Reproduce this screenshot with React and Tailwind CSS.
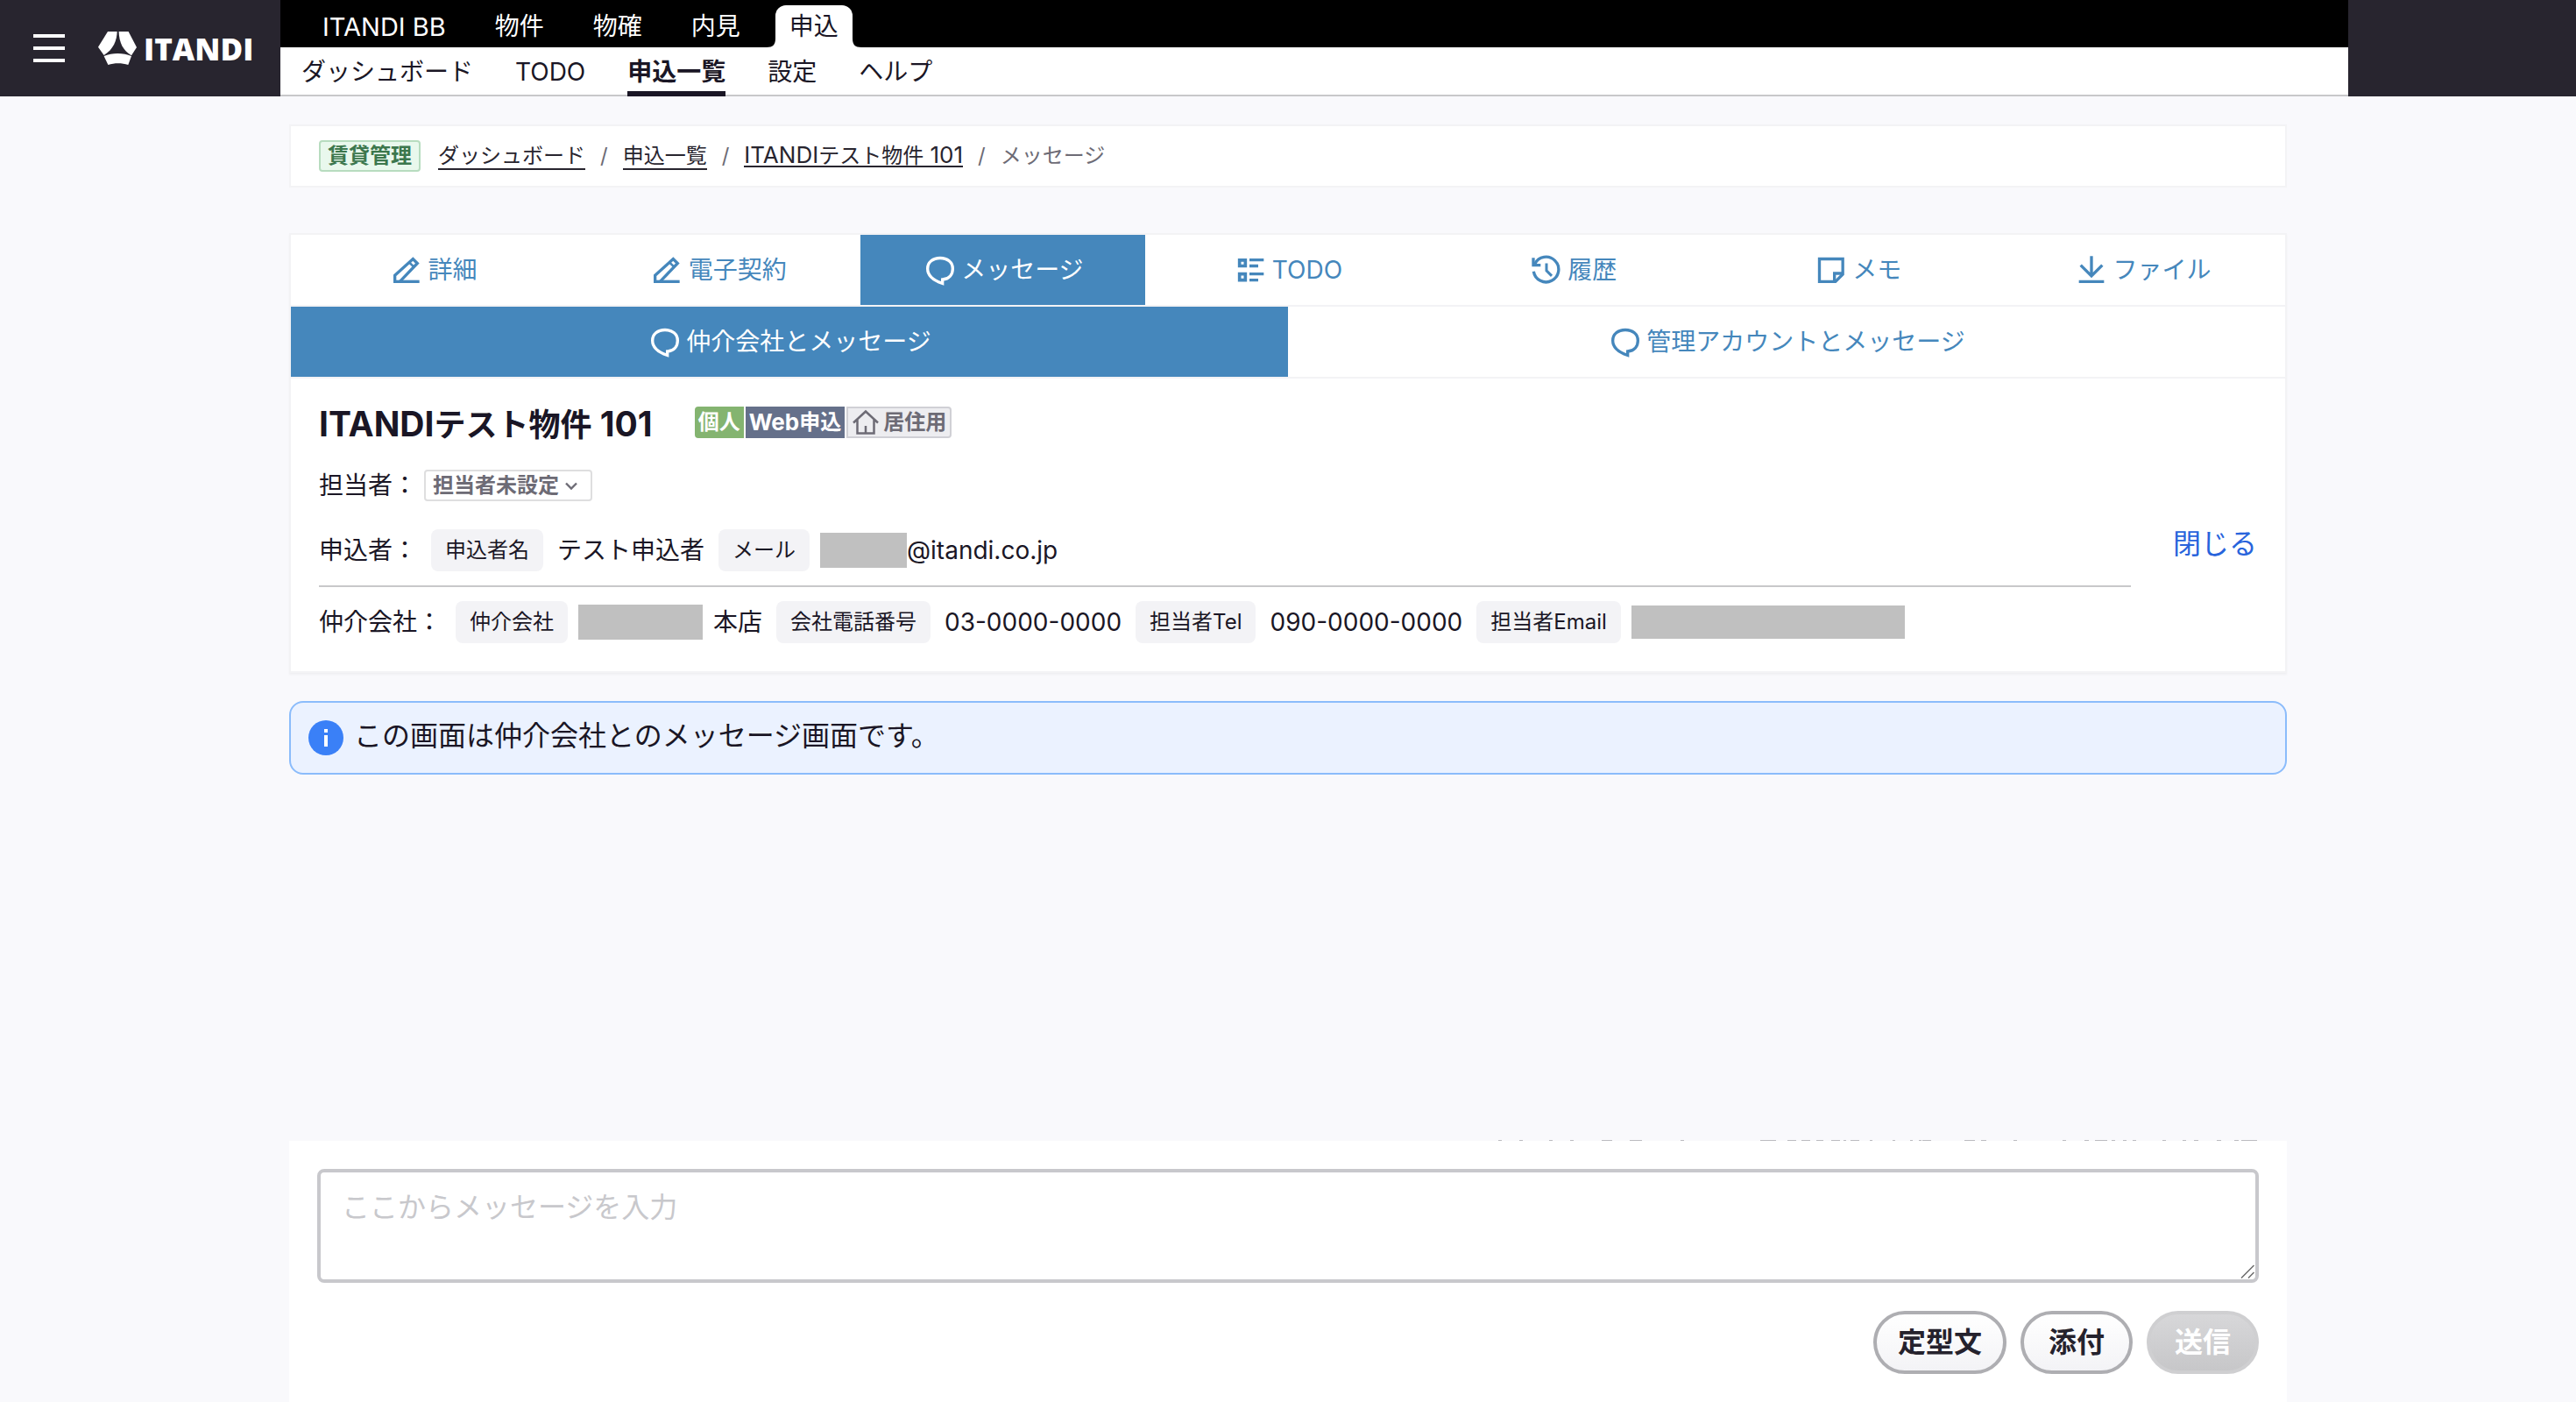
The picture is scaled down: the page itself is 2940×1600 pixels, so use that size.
import React from "react";

const productLinks = ["物件", "物確", "内見"];

function Icon({ children, className = "size-10" }) {
  return (
    <svg viewBox="0 0 24 24" fill="none" stroke="currentColor" strokeWidth="2" className={className + " shrink-0"} aria-hidden="true">
      {children}
    </svg>
  );
}

const PencilIcon = () => (
  <Icon>
    <path d="M2.4 20H20.2" />
    <path d="M3.4 20v-4.2L15.8 4.5l3 3L6.8 20" strokeWidth="2" />
    <path d="M13.2 6.800l3.200 3.200" strokeWidth="1.600" />
  </Icon>
);

const BubbleIcon = () => (
  <Icon>
    <path d="M13.6 18.600c4.600-.4 7-3.500 7-7.400C20.600 6.800 17 3.900 12 3.900S3.400 6.800 3.400 11.200c0 4.700 4.200 8 10.200 10z" />
  </Icon>
);

const TodoIcon = () => (
  <Icon>
    <path d="M4 5.300h4v4H4zM4 14.800h4v4.200H4z" strokeWidth="2.200" />
    <path d="M10.800 5.200h9.800M10.800 9.300h6M10.800 14.800h9.800M10.800 19h6" strokeWidth="2" />
  </Icon>
);

const HistoryIcon = () => (
  <Icon>
    <path d="M4 7.900A8.600 8.600 0 1 1 3.200 13" />
    <path d="M3 3.800v5h5" />
    <path d="M12 7.500v5l3.600 3.600" strokeWidth="1.800" />
  </Icon>
);

const MemoIcon = () => (
  <Icon>
    <path d="M3.900 4.500h16V15l-5 5h-11z" />
    <path d="M14.200 20v-5.600H20" />
  </Icon>
);

const DownloadIcon = () => (
  <Icon>
    <path d="M12 2.500v14M4.600 8.800L12 16.200l7.400-7.400M3.400 20h17.200" />
  </Icon>
);

const tabs = [
  { label: "詳細", icon: PencilIcon },
  { label: "電子契約", icon: PencilIcon },
  { label: "メッセージ", icon: BubbleIcon, active: true },
  { label: "TODO", icon: TodoIcon },
  { label: "履歴", icon: HistoryIcon },
  { label: "メモ", icon: MemoIcon },
  { label: "ファイル", icon: DownloadIcon },
];

const subTabs = [
  { label: "仲介会社とメッセージ", active: true },
  { label: "管理アカウントとメッセージ" },
];

function Tab({ label, icon: TabIcon, active }) {
  return (
    <a
      href="#"
      aria-current={active ? "page" : undefined}
      className={
        "flex h-20 flex-1 items-center justify-center gap-1 text-[28px] leading-none " +
        (active ? "bg-[#4587bc] text-white" : "text-[#4587bc]")
      }
    >
      <TabIcon />
      {label}
    </a>
  );
}

function Logo() {
  return (
    <a href="#" aria-label="ITANDI" className="flex items-center gap-2 text-white">
      <svg viewBox="112 34 44 40" className="h-10 w-11" fill="currentColor" aria-hidden="true">
        <path d="M123 35h10.600c0 9.500-4.200 20.500-15 27l-6.600-9.300z" />
        <path d="M135.600 35h11L156 53l-6 9.300c-9.500-5.500-14-14.500-14.400-27.300z" />
        <path d="M118.600 63c9.500-4 22-4 31.400 0l-3.700 10c-7.500-2.200-15.500-2.200-22.900 0z" />
      </svg>
      <span className="font-['Open_Sans',sans-serif] text-[35px] leading-none font-extrabold">ITANDI</span>
    </a>
  );
}

function Chip({ children }) {
  return (
    <dt className="flex h-12 items-center rounded-lg bg-[#f3f3f6] px-4 text-2xl leading-none whitespace-nowrap">{children}</dt>
  );
}

const slivers = [
  [56, 4], [80, 4], [114, 4], [138, 4], [174, 12], [206, 14], [264, 4], [355, 18], [386, 10], [402, 10],
  [419, 8], [436, 10], [450, 3], [458, 10], [480, 3], [506, 3], [526, 3], [536, 3], [540, 10], [588, 12], [607, 6],
  [644, 4], [700, 4], [725, 5], [737, 14], [756, 4], [769, 4], [780, 4], [814, 4], [837, 4], [850, 5], [876, 5],
  [896, 5], [904, 18],
];

export default function App() {
  return (
    <div className="flex min-h-screen flex-col bg-[#f9f9fc] font-['Inter','Noto_Sans_CJK_JP',sans-serif] text-[#1a1625]">
      <header className="flex bg-[#28252f]">
        <div className="flex w-80 shrink-0 items-center gap-[38px] pl-[38px]">
          <button type="button" aria-label="メニュー" className="flex w-9 flex-col gap-2.5">
            <span className="h-1 bg-white" />
            <span className="h-1 bg-white" />
            <span className="h-1 bg-white" />
          </button>
          <Logo />
        </div>
        <div className="min-w-0 flex-1">
          <nav aria-label="サービス" className="flex h-[54px] items-end gap-6 bg-black pl-8 text-[28px] leading-none text-white">
            <a href="#" className="flex h-12 items-center px-4 text-[29px]">ITANDI BB</a>
            {productLinks.map((label) => (
              <a key={label} href="#" className="flex h-12 items-center px-4">
                {label}
              </a>
            ))}
            <a href="#" aria-current="page" className="relative flex h-12 items-center rounded-t-xl bg-white px-4 text-[#1a1625]">
              <svg viewBox="0 0 10 10" className="absolute bottom-0 -left-2.5 size-2.5" aria-hidden="true">
                <path d="M10 0v10H0C7 10 10 7 10 0z" fill="#fff" />
              </svg>
              申込
              <svg viewBox="0 0 10 10" className="absolute -right-2.5 bottom-0 size-2.5" aria-hidden="true">
                <path d="M0 0v10h10C3 10 0 7 0 0z" fill="#fff" />
              </svg>
            </a>
          </nav>
          <nav aria-label="申込" className="flex h-14 gap-12 border-b-2 border-[#c8c8ca] bg-white pt-0.5 pl-6 text-[28px] leading-none">
            <a href="#" className="flex items-center">ダッシュボード</a>
            <a href="#" className="flex items-center">TODO</a>
            <a href="#" aria-current="page" className="-mb-0.5 flex items-center border-b-6 border-[#1a1625] pt-1 font-bold">
              申込一覧
            </a>
            <a href="#" className="flex items-center">設定</a>
            <a href="#" className="flex items-center">ヘルプ</a>
          </nav>
        </div>
        <div className="w-[260px] shrink-0" />
      </header>

      <main className="mx-auto flex w-full max-w-[2280px] flex-1 flex-col pt-8">
        <nav aria-label="パンくず" className="flex h-[72px] items-center border-2 border-[#f3f3f5] bg-white px-8 text-2xl leading-none text-[#28252f]">
          <span className="mr-5 flex h-9 items-center rounded border-2 border-[#b7dcbf] bg-[#e9f8ed] px-2 font-bold text-[#3c774d]">賃貸管理</span>
          <ol className="flex items-center gap-[17px] text-[#6d6b75]">
            <li><a href="#" className="border-b-2 border-[#28252f] text-[#28252f]">ダッシュボード</a></li>
            <li aria-hidden="true">/</li>
            <li><a href="#" className="border-b-2 border-[#28252f] text-[#28252f]">申込一覧</a></li>
            <li aria-hidden="true">/</li>
            <li>
              <a href="#" className="flex h-[26px] items-baseline border-b-2 border-[#28252f] text-[#28252f]">
                <span className="text-[26px] leading-6">ITANDI</span>テスト物件<span className="text-[26px] leading-6 whitespace-pre"> 101</span>
              </a>
            </li>
            <li aria-hidden="true">/</li>
            <li aria-current="page">メッセージ</li>
          </ol>
        </nav>

        <section className="mt-[52px] border-2 border-[#f3f3f5] bg-white shadow-[0_2px_2px_rgba(0,0,0,0.04)]">
          <nav aria-label="申込メニュー" className="flex border-b-2 border-[#f3f3f5]">
            {tabs.map((tab) => (
              <Tab key={tab.label} {...tab} />
            ))}
          </nav>
          <nav aria-label="メッセージの相手" className="flex border-b-2 border-[#f3f3f5]">
            {subTabs.map((tab) => (
              <Tab key={tab.label} {...tab} icon={BubbleIcon} />
            ))}
          </nav>

          <div className="p-8">
            <div className="flex h-10 items-start gap-12">
              <h1 className="text-4xl leading-10 font-bold whitespace-pre">
                <span className="text-[39px] leading-10">ITANDI</span>テスト物件<span className="text-[39px] leading-10"> 101</span>
              </h1>
              <div className="flex h-9 gap-0.5 text-2xl leading-none font-bold">
                <span className="flex items-center rounded-l bg-[#84b470] px-1 text-white">個人</span>
                <span className="flex items-center bg-[#65708a] px-1 text-white">
                  <span className="text-[26px]">Web</span>申込
                </span>
                <span className="flex items-center gap-1 rounded-r border-2 border-[#d0d0d5] bg-[#ededf0] px-1 text-[#6d6b75]">
                  <svg viewBox="0 0 32 30" fill="none" stroke="currentColor" strokeWidth="2.500" className="h-[30px] w-8" aria-hidden="true">
                    <path d="M2 15.500L16 2.500l14 13M6.500 12V27.500h19V12M16 27v-8" />
                  </svg>
                  居住用
                </span>
              </div>
            </div>

            <div className="mt-1 flex items-center gap-12">
              <div className="min-w-0 flex-1 text-[28px] leading-none">
                <div className="flex items-center gap-2 pt-7">
                  <label htmlFor="assignee">担当者：</label>
                  <div className="relative">
                    <select
                      id="assignee"
                      className="block h-9 appearance-none rounded border-2 border-[#dededf] bg-white pr-9 pl-2 text-2xl leading-none font-bold text-[#6d6b75]"
                    >
                      <option>担当者未設定</option>
                    </select>
                    <svg viewBox="0 0 16 10" fill="none" stroke="#6d6b75" strokeWidth="2.400" className="pointer-events-none absolute top-3.5 right-4 h-2.5 w-4" aria-hidden="true">
                      <path d="M2 1.500l6 6 6-6" />
                    </svg>
                  </div>
                </div>

                <div className="mt-8 flex items-center gap-4 border-b-2 border-[#c8c8ca] pb-4">
                  <span>申込者：</span>
                  <dl className="flex items-center gap-4">
                    <Chip>申込者名</Chip>
                    <dd>テスト申込者</dd>
                    <Chip>メール</Chip>
                    <dd className="-ml-1 flex items-center">
                      <span className="h-10 w-[99px] bg-[#c0c0c0]" />
                      @itandi.co.jp
                    </dd>
                  </dl>
                </div>

                <div className="flex items-center gap-4 pt-4">
                  <span>仲介会社：</span>
                  <dl className="flex items-center gap-4">
                    <Chip>仲介会社</Chip>
                    <dd className="-ml-1 flex items-center gap-3">
                      <span className="h-10 w-[142px] bg-[#c0c0c0]" />
                      本店
                    </dd>
                    <Chip>会社電話番号</Chip>
                    <dd>03-0000-0000</dd>
                    <Chip>担当者Tel</Chip>
                    <dd>090-0000-0000</dd>
                    <Chip>担当者Email</Chip>
                    <dd className="-ml-1 h-[38px] w-[312px] bg-[#c0c0c0]" />
                  </dl>
                </div>
              </div>
              <button type="button" className="text-[32px] leading-none text-[#2864dc]">閉じる</button>
            </div>
          </div>
        </section>

        <div role="status" className="mt-8 flex h-[84px] items-center gap-3 rounded-2xl border-2 border-[#8bbcfb] bg-[#ebf2ff] pl-5 text-[32px] leading-none">
          <svg viewBox="0 0 40 40" className="size-10" aria-hidden="true">
            <circle cx="20" cy="20" r="20" fill="#3a80f7" />
            <path d="M18 10h4v4h-4zM18 17h4v13h-4z" fill="#fff" />
          </svg>
          <p className="pb-1">この画面は仲介会社とのメッセージ画面です。</p>
        </div>

        <svg viewBox="0 0 924 1" className="mt-auto mr-8 h-px w-[924px] self-end" fill="#bcbcc0" aria-hidden="true">
          {slivers.map(([x, w]) => (
            <rect key={x} x={x} y="0" width={w} height="1" />
          ))}
        </svg>
        <form className="bg-white p-8">
          <div className="relative">
            <textarea
              aria-label="メッセージ"
              placeholder="ここからメッセージを入力"
              className="block h-[130px] w-full resize-none rounded-lg border-4 border-[#c8c8cc] bg-white px-6 pt-[18px] text-[32px] leading-[44px] placeholder:text-[#c8c8cc]"
            />
            <svg viewBox="0 0 16 16" stroke="#6b6b6b" strokeWidth="1.500" className="pointer-events-none absolute right-[5px] bottom-[5px] size-4" aria-hidden="true">
              <path d="M1 15.500L15.500 1M9 15.500l6.500-6.500" />
            </svg>
          </div>
          <div className="mt-8 flex justify-end gap-4 text-[32px] leading-none font-bold">
            <button type="button" className="h-[72px] rounded-full border-4 border-[#aeaeb2] bg-linear-to-b from-white to-[#f3f3f6] px-6 text-[#25222d]">定型文</button>
            <button type="button" className="h-[72px] rounded-full border-4 border-[#aeaeb2] bg-linear-to-b from-white to-[#f3f3f6] px-7 text-[#25222d]">添付</button>
            <button type="submit" disabled className="h-[72px] rounded-full border-4 border-[#cfcfd1] bg-linear-to-b from-[#d7d7d9] to-[#c7c7c9] px-7 text-white">送信</button>
          </div>
        </form>
      </main>
    </div>
  );
}
